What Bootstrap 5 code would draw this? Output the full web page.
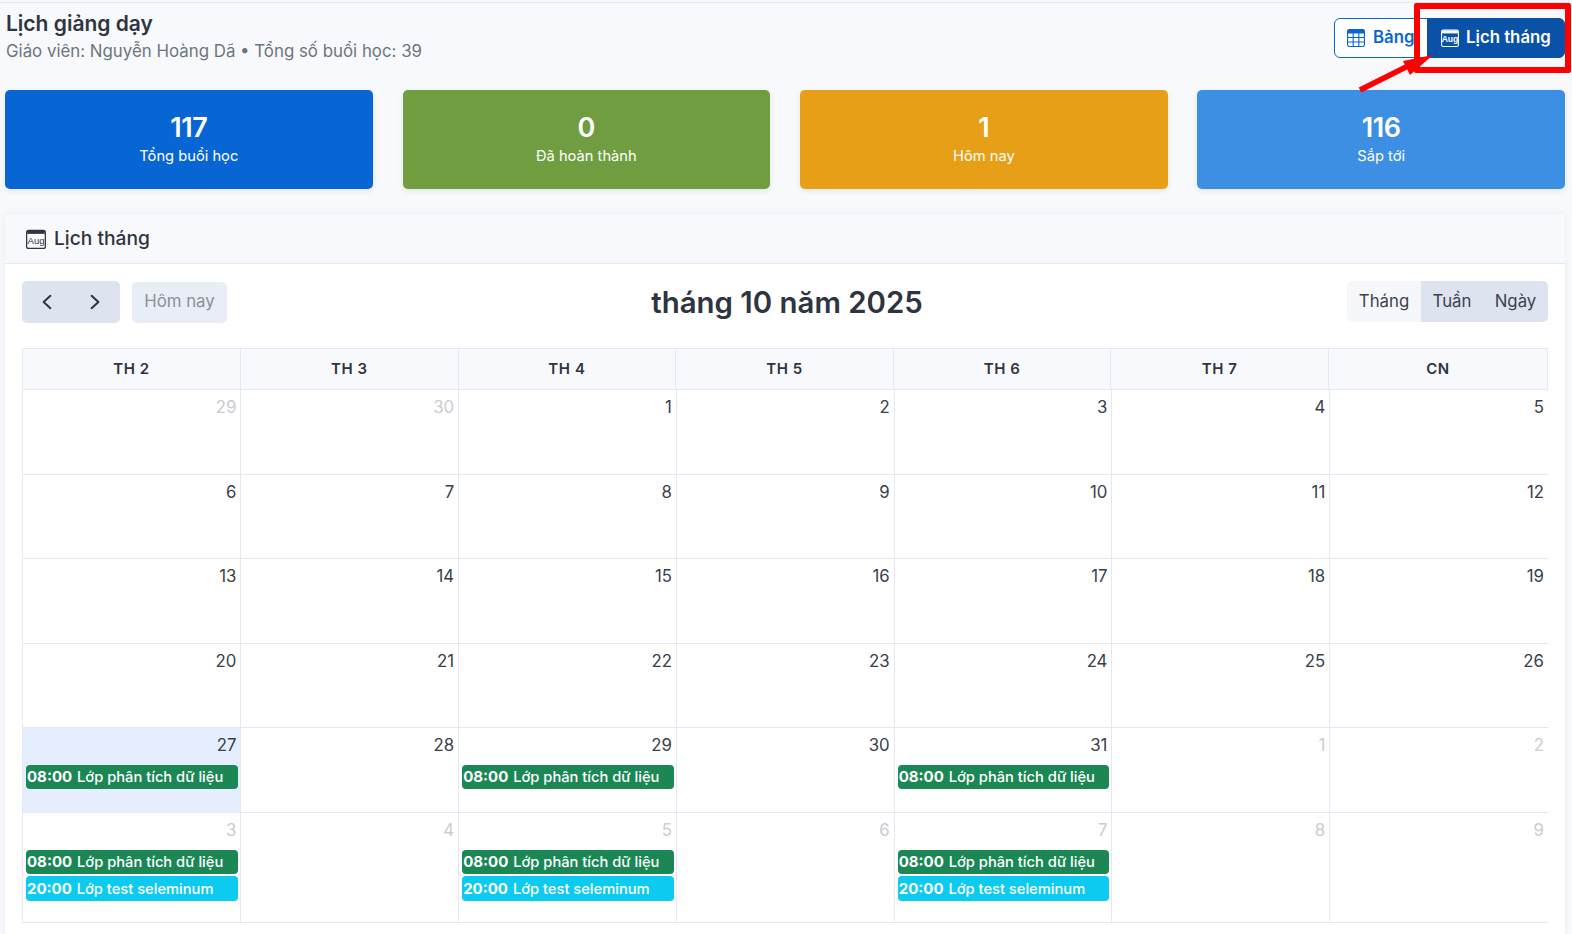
<!DOCTYPE html>
<html lang="vi"><head><meta charset="utf-8"><title>Lịch giảng dạy</title>
<link href="https://cdn.jsdelivr.net/npm/bootstrap@5.3.0/dist/css/bootstrap.min.css" rel="stylesheet">
<style>
html,body{height:934px;overflow:hidden}
body{background:#f8f9fc;font-family:Inter,"Noto Sans",sans-serif;color:#2e3440;position:relative}
.page-wrap{border-top:1px solid #e3e8f2;margin-top:2px;padding:0 7px 0 5px}
.top-bar{height:87px;padding-top:9px}
.page-title{font-size:21px;font-weight:600;line-height:24px;margin:0 0 3px 1px;color:#2e3440}
.page-sub{font-size:16.85px;line-height:24px;color:#6c757d;margin-left:1px}
.view-group{margin-top:6px}
.view-group .btn{height:40px;font-size:16.8px;font-weight:600;padding:0 12px;display:flex;align-items:center;gap:8px;white-space:nowrap}
.view-group svg{flex-shrink:0}
.btn-bang{border:1px solid #0866d4;color:#0866d4;width:96px;background:#fff;border-radius:6px 0 0 6px}
.view-group .btn-lich{background:#0a52a8;color:#fff;border:1px solid #0a52a8;width:138px;border-radius:0 6px 6px 0;margin-left:-3px;padding-left:13px;gap:7px}
.stats{gap:30px}
.stat-box{flex:1 1 0;height:99px;border-radius:5px;color:#fff;text-align:center;padding-top:21px;box-shadow:0 2px 6px rgba(0,0,0,.08)}
.stat-num{font-size:27px;font-weight:600;line-height:33px;letter-spacing:-.4px}
.stat-lbl{font-size:14.7px;line-height:22px;margin-top:1px}
.c1{background:#0866d4}.c2{background:#709d3f}.c3{background:#e69f17}.c4{background:#3d8fe3;margin-left:-.2px}
.cal-card{margin-top:25px;background:#fff;border:0;border-radius:0;box-shadow:0 0 6px rgba(40,60,100,.07);height:720px}
.cal-head{height:50px;background:#f8f9fc;border-bottom:1px solid #e3e8f2;padding:0 21px;font-size:19.2px;font-weight:500;gap:8px;color:#2e3440}
.cal-body{padding:17px 17px 0}
.tool{height:42px;margin-bottom:25px}
.tool-left{flex:0 0 364px}.tool-right{flex:0 0 360px}
.nav-pair{background:#dee4ef;border-radius:5px;width:98px;height:42px}
.nav-pair span{flex:1;display:flex;align-items:center;justify-content:center;padding-left:1px}
.nav-pair span+span{padding-left:0;padding-right:1px}
.today-btn{width:95px;height:41px;margin-left:12px;margin-top:1px;padding-bottom:2px;background:#e9edf5;color:#8b9099;border-radius:5px;font-size:16.8px;display:flex;align-items:center;justify-content:center}
.cal-title{font-size:29.4px;font-weight:600;margin:1px 0 0;line-height:42px;color:#2e3440}
.switcher{height:41px;border-radius:5px;overflow:hidden;font-size:16.8px;color:#3a4250}
.switcher span{display:flex;align-items:center;justify-content:center;background:#dee4ef;height:100%}
.switcher .on{background:#f5f7fb;width:74px}
.switcher .w2{width:62px}.switcher .w3{width:65px}
.head-grid{display:grid;grid-template-columns:218px repeat(5,217.6px) 1fr;border:1px solid #e3e8f2;border-bottom:0;width:100%}
.body-grid{display:grid;grid-template-columns:218.4px repeat(6,1fr);border-left:1px solid #e3e8f2;width:100%}
.dow{height:41px;background:#f8f9fc;border-right:1px solid #e3e8f2;border-bottom:1px solid #e3e8f2;font-size:15px;font-weight:600;letter-spacing:.6px;display:flex;align-items:center;justify-content:center;color:#2e3440}
.dow:last-child{border-right:0}
.cell{height:84.6px;border-right:1px solid #e3e8f2;border-bottom:1px solid #e3e8f2;padding:5px 2px 0 3px;overflow:hidden}
.cell:nth-child(7n){border-right:0}
.cell.tall{height:110px}
.day{font-size:16.8px;line-height:24px;text-align:right;padding-right:2px;color:#39404c;margin-bottom:8px}
.muted-day{color:#c9ccd1}
.today-cell{background:#e5eefc}
.ev{height:25px;border-radius:4px;color:#fff;font-size:14.7px;font-weight:500;line-height:25px;padding-left:1px;white-space:nowrap;overflow:hidden;margin-bottom:2px}
.ev b{font-weight:700;font-size:15px;margin-right:1px}
.ev-g{background:#1b8755;height:24px;line-height:24px}.ev-c{background:#0dcaf0}
.red-box{position:absolute;left:1414px;top:3px;width:157px;height:70px;border:6px solid #ff0000;border-radius:2px;pointer-events:none}
.red-arrow{position:absolute;left:0;top:0;pointer-events:none}
</style></head><body>
<div class="page-wrap">
  <div class="top-bar d-flex justify-content-between align-items-start">
    <div><h1 class="page-title">Lịch giảng dạy</h1><div class="page-sub">Giáo viên: Nguyễn Hoàng Dã • Tổng số buổi học: 39</div></div>
    <div class="view-group d-flex">
      <a class="btn btn-bang"><svg width="18" height="18" viewBox="0 0 16 16" fill="currentColor"><path d="M0 2a2 2 0 0 1 2-2h12a2 2 0 0 1 2 2v12a2 2 0 0 1-2 2H2a2 2 0 0 1-2-2V2zm15 2h-4v3h4V4zm0 4h-4v3h4V8zm0 4h-4v3h3a1 1 0 0 0 1-1v-2zm-5 3v-3H6v3h4zm-5 0v-3H1v2a1 1 0 0 0 1 1h3zm-4-4h4V8H1v3zm0-4h4V4H1v3zm5-3v3h4V4H6zm4 4H6v3h4V8z"/></svg>Bảng</a>
      <a class="btn btn-lich"><svg width="18" height="18" viewBox="0 0 16 16"><rect x=".5" y="1" width="15" height="14.5" rx="1.6" fill="none" stroke="currentColor"/><rect x="1" y="1.5" width="14" height="2.4" fill="currentColor"/><text x="8" y="11.8" font-size="7.6" text-anchor="middle" fill="currentColor" font-family="Liberation Sans">Aug</text></svg>Lịch tháng</a>
    </div>
  </div>
  <div class="stats d-flex">
    <div class="stat-box c1"><div class="stat-num">117</div><div class="stat-lbl">Tổng buổi học</div></div>
    <div class="stat-box c2"><div class="stat-num">0</div><div class="stat-lbl">Đã hoàn thành</div></div>
    <div class="stat-box c3"><div class="stat-num">1</div><div class="stat-lbl">Hôm nay</div></div>
    <div class="stat-box c4"><div class="stat-num">116</div><div class="stat-lbl">Sắp tới</div></div>
  </div>
  <div class="card cal-card">
    <div class="cal-head d-flex align-items-center">
      <svg width="20" height="20" viewBox="0 0 16 16"><rect x=".5" y="1" width="15" height="14.5" rx="1.6" fill="none" stroke="currentColor"/><rect x="1" y="1.5" width="14" height="2.4" fill="currentColor"/><text x="8" y="11.8" font-size="7.6" text-anchor="middle" fill="currentColor" font-family="Liberation Sans">Aug</text></svg>
      <span>Lịch tháng</span>
    </div>
    <div class="cal-body">
      <div class="tool d-flex justify-content-between align-items-start">
        <div class="tool-left d-flex">
          <div class="nav-pair d-flex">
            <span><svg width="18" height="18" viewBox="0 0 16 16" fill="none" stroke="#2e3440" stroke-width="1.8" stroke-linecap="round" stroke-linejoin="round"><path d="M11 2.5 5 8l6 5.5"/></svg></span>
            <span><svg width="18" height="18" viewBox="0 0 16 16" fill="none" stroke="#2e3440" stroke-width="1.8" stroke-linecap="round" stroke-linejoin="round"><path d="m5 2.5 6 5.5-6 5.5"/></svg></span>
          </div>
          <div class="today-btn">Hôm nay</div>
        </div>
        <h2 class="cal-title">tháng 10 năm 2025</h2>
        <div class="tool-right d-flex justify-content-end">
          <div class="switcher d-flex"><span class="on">Tháng</span><span class="w2">Tuần</span><span class="w3">Ngày</span></div>
        </div>
      </div>
      <div class="head-grid" id="head"></div>
      <div class="body-grid" id="grid"></div>
    </div>
  </div>
</div>
<div class="red-box"></div>
<svg class="red-arrow" width="1572" height="120" viewBox="0 0 1572 120"><path d="M1360 90 1412 64" stroke="#ff0000" stroke-width="5.5" fill="none"/><polygon points="1433,55 1403,61 1410,75" fill="#ff0000"/></svg>
<script>
var dows=['TH 2','TH 3','TH 4','TH 5','TH 6','TH 7','CN'];
var days=[29,30,1,2,3,4,5,6,7,8,9,10,11,12,13,14,15,16,17,18,19,20,21,22,23,24,25,26,27,28,29,30,31,1,2,3,4,5,6,7,8,9];
var g='<div class="ev ev-g"><b>08:00</b> Lớp phân tích dữ liệu</div>',c='<div class="ev ev-c"><b>20:00</b> Lớp test seleminum</div>';
document.getElementById('head').innerHTML=dows.map(function(d){return '<div class="dow">'+d+'</div>'}).join('');
var h='';
days.forEach(function(d,i){
  var out=i<2||i>32, cls='cell'+(i>=35?' tall':'')+(i==28?' today-cell':''), ev='';
  if(i==28||i==30||i==32)ev=g;
  if(i==35||i==37||i==39)ev=g+c;
  h+='<div class="'+cls+'"><div class="day'+(out?' muted-day':'')+'">'+d+'</div>'+ev+'</div>';
});
document.getElementById('grid').innerHTML=h;
</script>
<script src="https://cdn.jsdelivr.net/npm/bootstrap@5.3.0/dist/js/bootstrap.bundle.min.js"></script>
</body></html>
